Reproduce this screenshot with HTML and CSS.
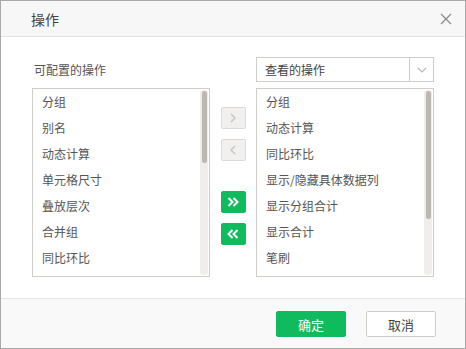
FILE: index.html
```html
<!DOCTYPE html>
<html lang="zh-CN">
<head>
    <meta charset="UTF-8">
    <title>操作</title>
    <link rel="stylesheet" href="styles.css">
</head>
<body>
    <div class="dialog">
        <div class="dialog-header">
            <span class="dialog-title">操作</span>
            <svg class="close-icon" width="12" height="12" viewBox="0 0 12 12">
                <path d="M1 1 L11 11 M11 1 L1 11" stroke="#8a8a8a" stroke-width="1.2" fill="none"/>
            </svg>
        </div>
        <div class="dialog-body">
            <div class="column">
                <div class="column-label">可配置的操作</div>
                <div class="list-box">
                    <ul class="list-items">
                        <li>分组</li>
                        <li>别名</li>
                        <li>动态计算</li>
                        <li>单元格尺寸</li>
                        <li>叠放层次</li>
                        <li>合并组</li>
                        <li>同比环比</li>
                    </ul>
                    <div class="scroll-track"><div class="scroll-thumb thumb-left"></div></div>
                </div>
            </div>
            <div class="move-buttons">
                <button class="move-btn">
                    <svg width="8" height="10" viewBox="0 0 8 10"><path d="M2 1 L6 5 L2 9" stroke="#c4c2bf" stroke-width="1.3" fill="none"/></svg>
                </button>
                <button class="move-btn">
                    <svg width="8" height="10" viewBox="0 0 8 10"><path d="M6 1 L2 5 L6 9" stroke="#c4c2bf" stroke-width="1.3" fill="none"/></svg>
                </button>
                <button class="move-btn green first-green">
                    <svg width="12" height="10" viewBox="0 0 12 10"><path d="M1.5 1 L5.5 5 L1.5 9 M6.5 1 L10.5 5 L6.5 9" stroke="#fff" stroke-width="2" fill="none"/></svg>
                </button>
                <button class="move-btn green">
                    <svg width="12" height="10" viewBox="0 0 12 10"><path d="M5.5 1 L1.5 5 L5.5 9 M10.5 1 L6.5 5 L10.5 9" stroke="#fff" stroke-width="2" fill="none"/></svg>
                </button>
            </div>
            <div class="column">
                <div class="select-box">
                    <span class="select-text">查看的操作</span>
                    <span class="select-arrow">
                        <svg width="10" height="6" viewBox="0 0 10 6"><path d="M1 1 L5 5 L9 1" stroke="#b5b5b5" stroke-width="1.1" fill="none"/></svg>
                    </span>
                </div>
                <div class="list-box">
                    <ul class="list-items">
                        <li>分组</li>
                        <li>动态计算</li>
                        <li>同比环比</li>
                        <li>显示/隐藏具体数据列</li>
                        <li>显示分组合计</li>
                        <li>显示合计</li>
                        <li>笔刷</li>
                    </ul>
                    <div class="scroll-track"><div class="scroll-thumb thumb-right"></div></div>
                </div>
            </div>
        </div>
        <div class="dialog-footer">
            <button class="footer-btn ok-btn">确定</button>
            <button class="footer-btn cancel-btn">取消</button>
        </div>
    </div>
</body>
</html>
```

FILE: styles.css
```css
body {
    margin: 0;
    font-family: "Noto Sans CJK SC", "Liberation Sans", sans-serif;
    font-size: 12px;
    color: #555;
    background-color: #fff;
}
.dialog {
    width: 466px;
    height: 349px;
    box-sizing: border-box;
    border: 1px solid #a9a9a9;
    display: flex;
    flex-direction: column;
    background-color: #fff;
}
.dialog-header {
    height: 35px;
    border-bottom: 1px solid #e3e3e3;
    background-color: #f7f7f7;
    display: flex;
    align-items: center;
    justify-content: space-between;
    padding: 0 13px 0 30px;
}
.dialog-title {
    font-size: 14px;
    color: #444;
}
.close-icon {
    display: block;
}
.dialog-body {
    flex: 1;
    display: flex;
    padding: 20px 0 0 31px;
}
.column {
    width: 178px;
    display: flex;
    flex-direction: column;
}
.column-label {
    height: 25px;
    line-height: 25px;
    padding-left: 2px;
    margin-bottom: 6px;
}
.list-box {
    height: 189px;
    box-sizing: border-box;
    border: 1px solid #cfcdc8;
    display: flex;
}
.list-items {
    flex: 1;
    list-style: none;
    margin: 0;
    padding: 0;
}
.list-items li {
    height: 26px;
    line-height: 25px;
    padding-left: 9px;
    white-space: nowrap;
}
.scroll-track {
    width: 8px;
    margin: 1px 1px 1px 0;
    background-color: #efeeec;
    border-radius: 3px;
    display: flex;
    justify-content: center;
}
.scroll-thumb {
    width: 5px;
    margin-top: 1px;
    background-color: #bbb8b1;
    border-radius: 3px;
}
.thumb-left {
    height: 72px;
}
.thumb-right {
    height: 128px;
}
.move-buttons {
    width: 46px;
    display: flex;
    flex-direction: column;
    align-items: center;
    padding-top: 50px;
}
.move-btn {
    width: 25px;
    height: 22px;
    box-sizing: border-box;
    border: 1px solid #dddbd8;
    border-radius: 2px;
    background-color: #f1f0ef;
    padding: 0;
    margin-bottom: 10px;
    display: flex;
    align-items: center;
    justify-content: center;
}
.move-btn.green {
    background-color: #0fbb5c;
    border-color: #0fbb5c;
}
.move-btn.first-green {
    margin-top: 20px;
}
.select-box {
    height: 25px;
    box-sizing: border-box;
    border: 1px solid #cfcdc8;
    display: flex;
    margin-bottom: 6px;
}
.select-text {
    flex: 1;
    line-height: 23px;
    padding-left: 8px;
    color: #444;
}
.select-arrow {
    width: 23px;
    border-left: 1px solid #cfcdc8;
    display: flex;
    align-items: center;
    justify-content: center;
}
.dialog-footer {
    height: 50px;
    border-top: 1px solid #e6e6e6;
    background-color: #f9f9f9;
    display: flex;
    justify-content: flex-end;
    align-items: flex-start;
    padding: 12px 29px 0 0;
    box-sizing: border-box;
    gap: 20px;
}
.footer-btn {
    width: 70px;
    height: 26px;
    box-sizing: border-box;
    border-radius: 2px;
    font-family: "Noto Sans CJK SC", "Liberation Sans", sans-serif;
    font-size: 13px;
    padding: 0;
}
.ok-btn {
    background-color: #0fbb5c;
    border: 1px solid #0fbb5c;
    color: #fff;
}
.cancel-btn {
    background-color: #fff;
    border: 1px solid #cfcdc8;
    color: #444;
}
```
